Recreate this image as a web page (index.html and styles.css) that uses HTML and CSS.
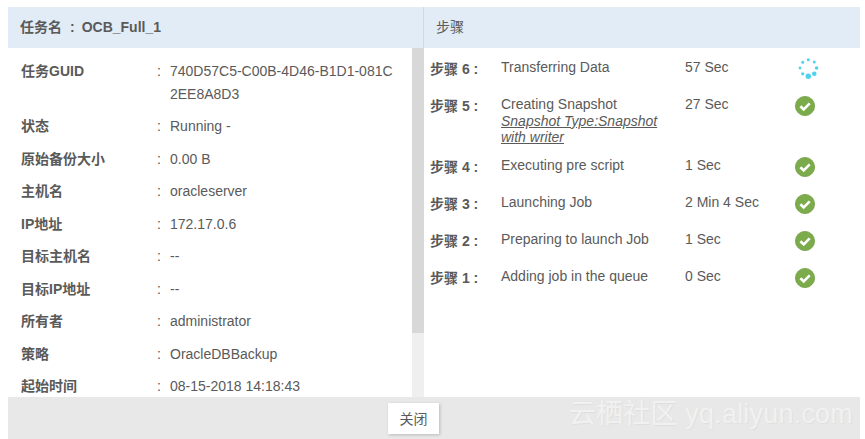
FILE: index.html
```html
<!DOCTYPE html>
<html lang="en">
<head>
    <meta charset="UTF-8">
    <meta name="viewport" content="width=device-width, initial-scale=1.0">
    <title>任务详情</title>
    <link rel="stylesheet" href="styles.css">
</head>
<body>

    <div class="dialog">
        <div class="columns">
            <!-- Job details -->
            <div class="panel panel-left">
                <div class="panel-head"><span class="job-name">任务名<span class="job-colon">:</span>OCB_Full_1</span></div>
                <div class="panel-main">
                    <div class="details">
                        <div class="detail"><div class="detail-label">任务GUID</div><div class="detail-colon">:</div><div class="detail-value">740D57C5-C00B-4D46-B1D1-081C2EE8A8D3</div></div>
                        <div class="detail"><div class="detail-label">状态</div><div class="detail-colon">:</div><div class="detail-value">Running -</div></div>
                        <div class="detail"><div class="detail-label">原始备份大小</div><div class="detail-colon">:</div><div class="detail-value">0.00 B</div></div>
                        <div class="detail"><div class="detail-label">主机名</div><div class="detail-colon">:</div><div class="detail-value">oracleserver</div></div>
                        <div class="detail"><div class="detail-label">IP地址</div><div class="detail-colon">:</div><div class="detail-value">172.17.0.6</div></div>
                        <div class="detail"><div class="detail-label">目标主机名</div><div class="detail-colon">:</div><div class="detail-value">--</div></div>
                        <div class="detail"><div class="detail-label">目标IP地址</div><div class="detail-colon">:</div><div class="detail-value">--</div></div>
                        <div class="detail"><div class="detail-label">所有者</div><div class="detail-colon">:</div><div class="detail-value">administrator</div></div>
                        <div class="detail"><div class="detail-label">策略</div><div class="detail-colon">:</div><div class="detail-value">OracleDBBackup</div></div>
                        <div class="detail"><div class="detail-label">起始时间</div><div class="detail-colon">:</div><div class="detail-value">08-15-2018 14:18:43</div></div>
                    </div>
                    <div class="scrollbar"><div class="scrollbar-thumb"></div></div>
                </div>
            </div>

            <!-- Steps -->
            <div class="panel panel-right">
                <div class="panel-head panel-head-steps">步骤</div>
                <div class="steps">
                    <div class="step">
                        <div class="step-label">步骤 6 :</div>
                        <div class="step-name">Transferring Data</div>
                        <div class="step-time">57 Sec</div>
                        <svg class="step-icon" width="20" height="20" viewBox="0 0 20 20">
                            <g fill="#4dd2f0">
                                <circle cx="13.3" cy="0.7" r="1.5"/>
                                <circle cx="19.3" cy="3.1" r="1.5"/>
                                <circle cx="21.6" cy="9" r="1.8"/>
                                <circle cx="19.3" cy="14.8" r="2.3"/>
                                <circle cx="13.3" cy="17.3" r="2.7"/>
                                <circle cx="7.7" cy="14.8" r="1.6"/>
                                <circle cx="5" cy="9" r="1.4"/>
                                <circle cx="7.7" cy="3.2" r="1.5"/>
                            </g>
                        </svg>
                    </div>
                    <div class="step">
                        <div class="step-label">步骤 5 :</div>
                        <div class="step-name">Creating Snapshot<a class="step-note">Snapshot Type:Snapshot with writer</a></div>
                        <div class="step-time">27 Sec</div>
                        <svg class="step-icon" width="20" height="20" viewBox="0 0 20 20"><circle cx="10" cy="10" r="9.6" fill="#7cab4c" stroke="#71a043" stroke-width="0.8"/><path d="M5.4 10.2l3.3 3.2 6-6" fill="none" stroke="#fff" stroke-width="2.6"/></svg>
                    </div>
                    <div class="step">
                        <div class="step-label">步骤 4 :</div>
                        <div class="step-name">Executing pre script</div>
                        <div class="step-time">1 Sec</div>
                        <svg class="step-icon" width="20" height="20" viewBox="0 0 20 20"><circle cx="10" cy="10" r="9.6" fill="#7cab4c" stroke="#71a043" stroke-width="0.8"/><path d="M5.4 10.2l3.3 3.2 6-6" fill="none" stroke="#fff" stroke-width="2.6"/></svg>
                    </div>
                    <div class="step">
                        <div class="step-label">步骤 3 :</div>
                        <div class="step-name">Launching Job</div>
                        <div class="step-time">2 Min 4 Sec</div>
                        <svg class="step-icon" width="20" height="20" viewBox="0 0 20 20"><circle cx="10" cy="10" r="9.6" fill="#7cab4c" stroke="#71a043" stroke-width="0.8"/><path d="M5.4 10.2l3.3 3.2 6-6" fill="none" stroke="#fff" stroke-width="2.6"/></svg>
                    </div>
                    <div class="step">
                        <div class="step-label">步骤 2 :</div>
                        <div class="step-name">Preparing to launch Job</div>
                        <div class="step-time">1 Sec</div>
                        <svg class="step-icon" width="20" height="20" viewBox="0 0 20 20"><circle cx="10" cy="10" r="9.6" fill="#7cab4c" stroke="#71a043" stroke-width="0.8"/><path d="M5.4 10.2l3.3 3.2 6-6" fill="none" stroke="#fff" stroke-width="2.6"/></svg>
                    </div>
                    <div class="step">
                        <div class="step-label">步骤 1 :</div>
                        <div class="step-name">Adding job in the queue</div>
                        <div class="step-time">0 Sec</div>
                        <svg class="step-icon" width="20" height="20" viewBox="0 0 20 20"><circle cx="10" cy="10" r="9.6" fill="#7cab4c" stroke="#71a043" stroke-width="0.8"/><path d="M5.4 10.2l3.3 3.2 6-6" fill="none" stroke="#fff" stroke-width="2.6"/></svg>
                    </div>
                </div>
            </div>
        </div>

        <div class="dialog-foot">
            <button class="close-button">关闭</button>
            <div class="watermark">云栖社区 yq.aliyun.com</div>
        </div>
    </div>

</body>
</html>
```

FILE: styles.css
```css
* {
    margin: 0;
    padding: 0;
    box-sizing: border-box;
}

body {
    background-color: #fff;
    font-family: "Liberation Sans", "Noto Sans CJK SC", sans-serif;
    font-size: 14px;
    color: #5a5a5a;
    width: 865px;
    height: 439px;
    overflow: hidden;
    padding: 7px 5px 0 8px;
}

.dialog {
    display: flex;
    flex-direction: column;
    height: 432px;
}

.columns {
    display: flex;
    height: 390px;
}

.panel {
    display: flex;
    flex-direction: column;
    min-width: 0;
}

.panel-left {
    width: 416px;
}

.panel-right {
    flex: 1;
}

.panel-head {
    height: 41px;
    flex-shrink: 0;
    background-color: #e2ecf6;
    line-height: 40px;
    padding-left: 12px;
}

.panel-head-steps {
    padding-left: 12px;
    margin-left: -1px;
    border-left: 1px solid #d4d9de;
}

.job-name {
    font-weight: bold;
}

.job-colon {
    margin: 0 7px 0 8px;
}

.panel-main {
    flex: 1;
    display: flex;
    min-height: 0;
}

.details {
    flex: 1;
    overflow: hidden;
    padding: 11.6px 0 0 13px;
}

.detail {
    display: flex;
    line-height: 23px;
    margin-bottom: 9.5px;
}

.detail-label {
    width: 136px;
    font-weight: bold;
}

.detail-colon {
    width: 13px;
}

.detail-value {
    width: 224px;
    word-break: break-all;
}

.scrollbar {
    width: 12px;
    background-color: #efefef;
}

.scrollbar-thumb {
    height: 285px;
    background-color: #d8d8d8;
}

.steps {
    flex: 1;
    padding-top: 11px;
}

.step {
    display: flex;
    min-height: 26px;
    margin-bottom: 11px;
    line-height: 16.5px;
}

.step-label {
    width: 71px;
    margin-left: 6px;
    padding-top: 2px;
    font-weight: bold;
}

.step-name {
    width: 184px;
}

.step-note {
    display: block;
    font-style: italic;
    text-decoration: underline;
}

.step-time {
    width: 110px;
}

.step-icon {
    flex-shrink: 0;
    overflow: visible;
}

.dialog-foot {
    position: relative;
    flex: 1;
    display: flex;
    align-items: center;
    padding-left: 380px;
    background-color: #e8e8e8;
}

.close-button {
    width: 51px;
    height: 31px;
    border: none;
    background-color: #fff;
    box-shadow: 1px 1px 3px rgba(0, 0, 0, 0.2);
    font-family: inherit;
    font-size: 14px;
    color: #5a5a5a;
    cursor: pointer;
}

.watermark {
    position: absolute;
    right: 7px;
    top: 0;
    line-height: 34px;
    font-size: 27px;
    letter-spacing: 0.2px;
    color: #f1f1f1;
    text-shadow: 1px 1px 1px rgba(0, 0, 0, 0.04);
    white-space: nowrap;
}
```
